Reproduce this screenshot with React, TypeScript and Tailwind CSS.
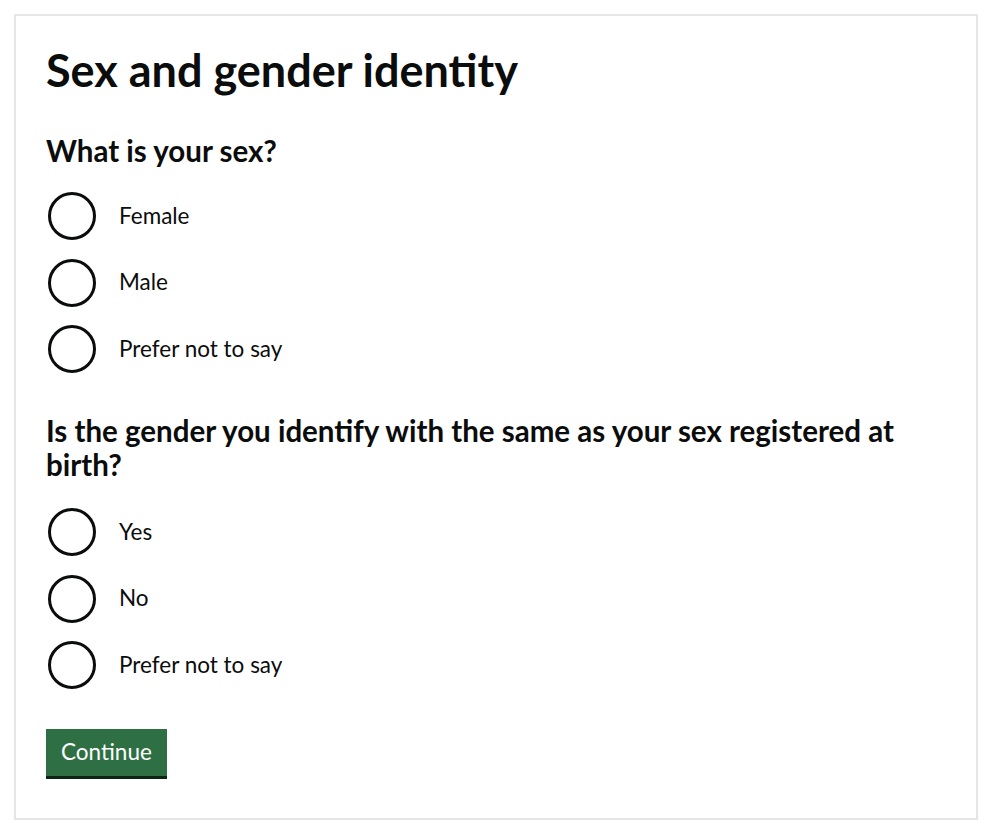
import React from "react";

function Radio({ label }: { label: string }) {
  return (
    <label className="flex items-center h-[48px] cursor-pointer">
      <span className="w-[48px] h-[48px] rounded-full border-[3px] border-[#0b0c0c] bg-white shrink-0" />
      <span className="ml-[23px] text-[22.5px] leading-none text-[#0b0c0c]">{label}</span>
    </label>
  );
}

export default function App() {
  return (
    <div className="bg-white min-h-[838px] pt-[14px] pl-[14px]" style={{ fontFamily: "Lato, 'Noto Sans', Arial, sans-serif" }}>
      <div className="border-2 border-[#e6e6e6] w-[964px] h-[806px] px-[30px] pt-[26px]">
        <h1 className="text-[45px] font-bold leading-[56px] text-[#0b0c0c]">Sex and gender identity</h1>
        <fieldset className="mt-[36px]">
          <legend className="text-[29.5px] font-bold leading-[34px] text-[#0b0c0c]">What is your sex?</legend>
          <div className="mt-[24px] flex flex-col gap-[18.5px] pl-[2px]">
            <Radio label="Female" />
            <Radio label="Male" />
            <Radio label="Prefer not to say" />
          </div>
        </fieldset>
        <fieldset className="mt-[41px]">
          <legend className="text-[29.5px] font-bold leading-[34px] text-[#0b0c0c]">
            Is the gender you identify with the same as your sex registered at birth?
          </legend>
          <div className="mt-[26px] flex flex-col gap-[18.5px] pl-[2px]">
            <Radio label="Yes" />
            <Radio label="No" />
            <Radio label="Prefer not to say" />
          </div>
        </fieldset>
        <button className="mt-[40px] h-[47px] px-[15px] bg-[#2e7044] text-white text-[22.5px] leading-none shadow-[0_3px_0_#0b2415]">
          Continue
        </button>
      </div>
    </div>
  );
}
